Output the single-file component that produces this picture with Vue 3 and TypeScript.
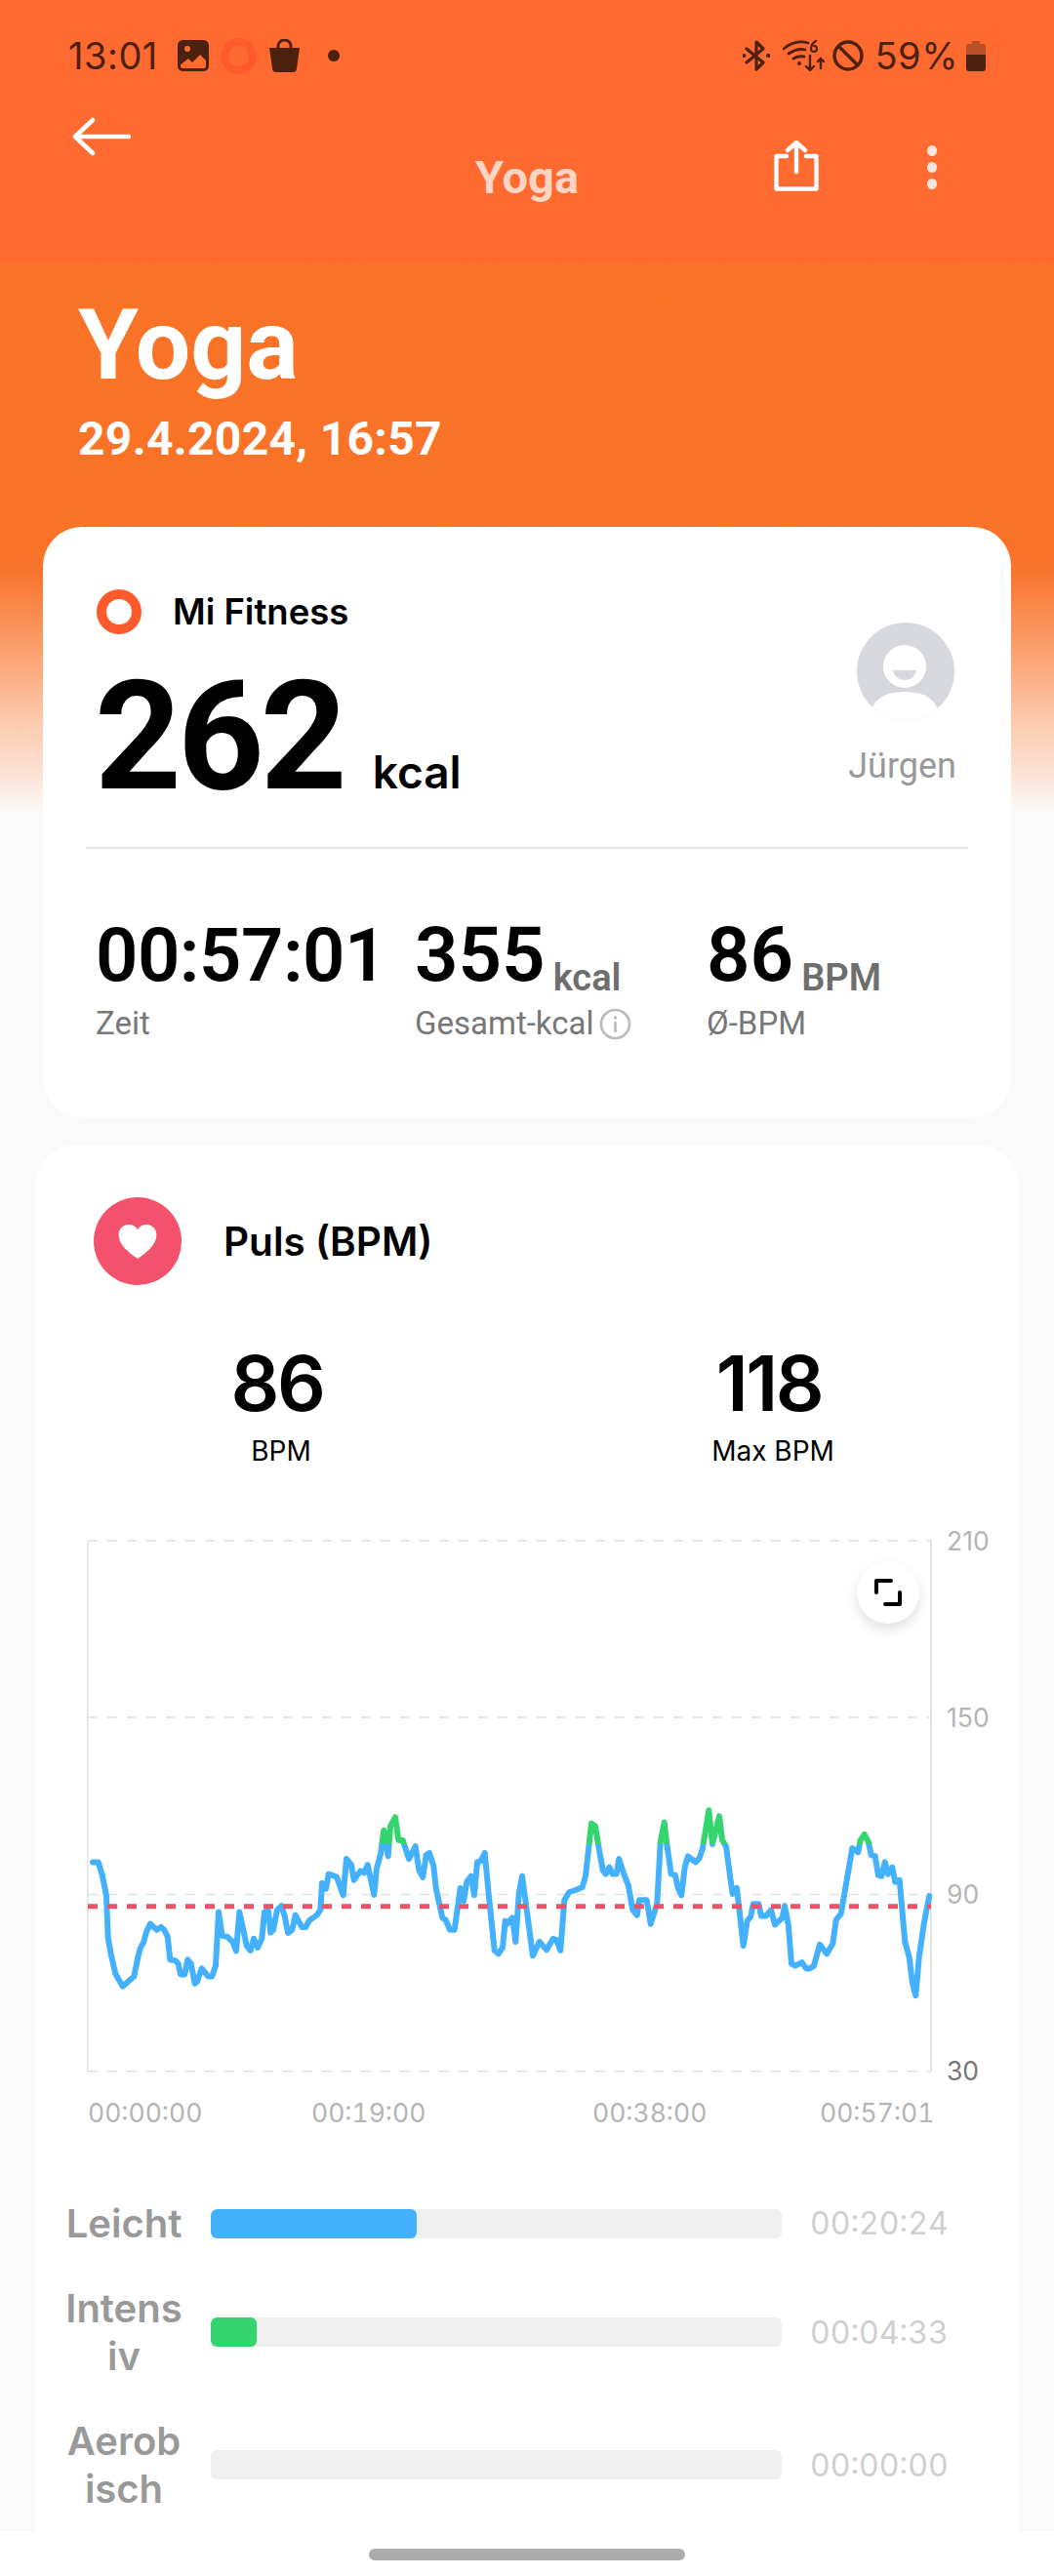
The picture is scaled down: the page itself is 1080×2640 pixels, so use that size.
<script setup lang="ts">
// heart rate trace, points read off the chart at (3x, 2.45y) scale
const raw: [number, number][] = [
  [105,905],[122,905],[135,940],[147,990],[152,1095],[162,1140],[175,1185],[197,1217],[232,1192],[245,1140],[252,1120],[262,1105],[270,1080],[282,1060],[302,1075],[315,1068],[325,1075],[335,1092],[343,1150],[358,1152],[368,1160],[375,1187],[388,1187],[397,1150],[407,1160],[419,1210],[426,1205],[440,1172],[460,1192],[472,1192],[483,1165],[492,1030],[503,1090],[518,1092],[535,1105],[546,1128],[556,1030],[568,1075],[578,1115],[590,1127],[600,1097],[612,1120],[625,1097],[633,1030],[645,1028],[652,1082],[660,1075],[672,1025],[685,1015],[695,1040],[705,1083],[718,1075],[728,1038],[748,1068],[760,1068],[770,1052],[795,1037],[805,1025],[810,958],[822,972],[830,935],[855,942],[875,988],[885,897],[900,912],[908,950],[928,927],[940,932],[950,912],[970,987],[978,920],[990,885],[1000,825],[1013,890],[1020,815],[1035,792],[1045,850],[1058,850],[1077,897],[1097,865],[1108,925],[1120,943],[1130,887],[1140,882],[1153,915],[1160,970],[1180,1045],[1190,1050],[1203,1075],[1217,1075],[1235,970],[1245,1003],[1255,955],[1268,940],[1278,988],[1287,905],[1298,902],[1310,882],[1322,985],[1340,1127],[1352,1135],[1365,1120],[1373,1052],[1380,1060],[1395,1045],[1405,1105],[1415,985],[1425,940],[1440,1030],[1458,1140],[1478,1105],[1500,1125],[1520,1097],[1530,1100],[1543,1127],[1555,1000],[1570,980],[1590,975],[1610,968],[1620,940],[1638,808],[1650,815],[1660,865],[1673,925],[1682,935],[1693,918],[1703,935],[1715,935],[1723,897],[1738,935],[1752,965],[1765,1025],[1778,1038],[1785,1000],[1808,1000],[1820,1060],[1840,1010],[1850,855],[1862,805],[1870,860],[1883,935],[1895,937],[1905,972],[1915,988],[1925,918],[1935,890],[1958,905],[1970,895],[1980,870],[1999,775],[2010,860],[2031,790],[2040,850],[2052,865],[2065,945],[2072,985],[2085,970],[2105,1115],[2117,1052],[2128,1042],[2135,1010],[2152,1010],[2160,1040],[2175,1040],[2190,1025],[2202,1062],[2225,1045],[2232,1015],[2243,1060],[2253,1160],[2265,1165],[2285,1157],[2298,1172],[2310,1172],[2322,1165],[2340,1112],[2362,1135],[2380,1110],[2390,1050],[2405,1035],[2440,870],[2458,880],[2465,850],[2477,835],[2490,855],[2498,888],[2510,890],[2520,938],[2530,940],[2540,905],[2550,935],[2563,918],[2572,955],[2585,950],[2602,1105],[2615,1145],[2625,1210],[2635,1240],[2645,1145],[2660,1060],[2667,1030],[2677,990],
]
const tracePoints = raw
  .map(([x, y]) => `${(x / 3 - 24).toFixed(1)},${(y / 2.45 - 34).toFixed(1)}`)
  .join(' ')

const gridLines = [
  { y: 6, label: '210' },
  { y: 187, label: '150' },
  { y: 368.4, label: '90' },
  { y: 549.7, label: '30' },
]
const timeLabels = [
  { x: 6, label: '00:00:00' },
  { x: 235, label: '00:19:00' },
  { x: 523, label: '00:38:00' },
  { x: 756, label: '00:57:01' },
]

const zones = [
  { name: 'Leicht', width: 36, color: '#44b1ff', time: '00:20:24' },
  { name: 'Intensiv', width: 8, color: '#34d46f', time: '00:04:33' },
  { name: 'Aerobisch', width: 0, color: '#44b1ff', time: '00:00:00' },
]
</script>

<template>
  <div class="screen">
    <header class="top">
      <div class="status">
        <div class="status-group">
          <span class="clock">13:01</span>
          <svg class="st-image" width="32" height="32" viewBox="0 0 32 32">
            <rect x="1.5" y="1.5" width="29" height="29" rx="4" fill="none" stroke="#4d2110" stroke-width="3" />
            <path d="M2 2h28v20l-7-7-8 8-4-4-9 7z" fill="#4d2110" />
            <circle cx="10" cy="9" r="3" fill="#ff6a30" />
          </svg>
          <span class="ring-small"></span>
          <svg width="33" height="34" viewBox="0 0 33 34">
            <path d="M10 10V7a6.5 6 0 0 1 13 0v3" fill="none" stroke="#4d2110" stroke-width="3" />
            <path d="M1 9h31l-3 21a4 4 0 0 1-4 4H8a4 4 0 0 1-4-4z" fill="#4d2110" />
          </svg>
          <span class="dot"></span>
        </div>
        <div class="status-group">
          <svg width="28" height="32" viewBox="0 0 28 32" fill="none" stroke="#4d2110" stroke-width="3.2" stroke-linejoin="round" stroke-linecap="round">
            <path d="M4 9l17 14-7 7V2l7 7L4 23" />
            <path d="M1 16h.5M26 16h.5" stroke-width="4" />
          </svg>
          <svg class="st-wifi" width="44" height="32" viewBox="0 0 44 32" fill="none" stroke="#4d2110" stroke-width="2.8" stroke-linecap="round">
            <path d="M1 9q12-10 25-6M6 14q9-6 17-4M11 19q5-3 11-2" />
            <circle cx="17" cy="24" r="2" fill="#4d2110" stroke="none" />
            <path d="M28 16v15m-4-4 4 4 4-4M39 29V19m-3 3 3-3 3 3" stroke-width="2.4" />
            <path d="M34 1q-5 3-5 8a3 3 0 1 0 3-3" stroke-width="2.2" />
          </svg>
          <svg class="st-block" width="32" height="32" viewBox="0 0 32 32" fill="none" stroke="#4d2110" stroke-width="3.4">
            <circle cx="16" cy="16" r="14" />
            <path d="M6 6l20 20" />
          </svg>
          <span class="clock">59%</span>
          <svg class="st-battery" width="22" height="32" viewBox="0 0 22 32">
            <path d="M7 1h8v3h3a3 3 0 0 1 3 3v8H1V7a3 3 0 0 1 3-3h3z" fill="#b9502a" />
            <path d="M1 15h20v14a3 3 0 0 1-3 3H4a3 3 0 0 1-3-3z" fill="#4d2110" />
          </svg>
        </div>
      </div>

      <div class="appbar">
        <svg class="back" width="60" height="40" viewBox="0 0 60 40" fill="none" stroke="#fff" stroke-width="4.6" stroke-linecap="round" stroke-linejoin="round">
          <path d="M21 3 3 20l18 17M3 20h55" />
        </svg>
        <span class="appbar-title">Yoga</span>
        <div class="actions">
          <svg class="share" width="46" height="53" viewBox="0 0 46 53" fill="none" stroke="#fff" stroke-width="4.4" stroke-linecap="round" stroke-linejoin="round">
            <path d="M13 17H2.500v33.500h41V17H33M23 33V3M14 11l9-8 9 8" />
          </svg>
          <div class="more">
            <span></span><span></span><span></span>
          </div>
        </div>
      </div>
    </header>

    <main class="content">
      <svg class="grain" width="1080" height="563">
        <filter id="grain-noise">
          <feTurbulence type="fractalNoise" baseFrequency="0.7" numOctaves="2" seed="3" />
          <feColorMatrix values="0 0 0 0 0.75  0 0 0 0 0.25  0 0 0 0 0  0 0 0 0.5 -0.1" />
        </filter>
        <rect width="1080" height="563" filter="url(#grain-noise)" />
      </svg>

      <div class="hero">
        <h1>Yoga</h1>
        <p>29.4.2024, 16:57</p>
      </div>

      <section class="card summary">
        <div class="summary-top">
          <div>
            <div class="source">
              <span class="ring"></span>
              <span>Mi Fitness</span>
            </div>
            <div class="calories">
              <span class="calories-value">262</span>
              <span class="calories-unit">kcal</span>
            </div>
          </div>
          <div class="user">
            <svg width="100" height="100" viewBox="0 0 100 100">
              <defs>
                <clipPath id="avatar-clip"><circle cx="50" cy="50" r="50" /></clipPath>
              </defs>
              <circle cx="50" cy="50" r="50" fill="#d6d8de" />
              <g clip-path="url(#avatar-clip)">
                <circle cx="49" cy="45" r="22" fill="#fff" />
                <path d="M37 49h24c-1 6-6 10-12 10s-11-4-12-10z" fill="#d6d8de" />
                <path d="M14 100V96q2-25 35-25t35 25v4z" fill="#fff" />
              </g>
            </svg>
            <span>Jürgen</span>
          </div>
        </div>
        <div class="divider"></div>
        <div class="stats">
          <div class="stat stat-time">
            <div class="stat-value time">00:57:01</div>
            <div class="stat-label">Zeit</div>
          </div>
          <div class="stat stat-total">
            <div class="stat-value">355<small>kcal</small></div>
            <div class="stat-label">
              Gesamt-kcal
              <svg width="33" height="33" viewBox="0 0 33 33" fill="none" stroke="#bbb" stroke-width="2.6">
                <circle cx="16.500" cy="16.500" r="14.500" />
                <path d="M16.500 15v9" stroke-linecap="round" />
                <circle cx="16.500" cy="10" r="1.700" fill="#bbb" stroke="none" />
              </svg>
            </div>
          </div>
          <div class="stat">
            <div class="stat-value">86<small>BPM</small></div>
            <div class="stat-label">Ø-BPM</div>
          </div>
        </div>
      </section>

      <section class="card pulse">
        <div class="pulse-head">
          <span class="heart">
            <svg width="42" height="37" viewBox="0 0 46 42">
              <path d="M23 41C9 31 1 23 1 13 1 6 6 1 13 1c4 0 8 2 10 6 2-4 6-6 10-6 7 0 12 5 12 12 0 10-8 18-22 28z" fill="#fff" />
            </svg>
          </span>
          <span>Puls (BPM)</span>
        </div>

        <div class="pulse-values">
          <div class="pulse-value">
            <strong>86</strong>
            <span>BPM</span>
          </div>
          <div class="pulse-value">
            <strong>118</strong>
            <span>Max BPM</span>
          </div>
        </div>

        <div class="chart">
          <svg width="980" height="610" viewBox="0 0 980 610">
            <defs>
              <clipPath id="zone-high"><rect x="0" y="0" width="980" height="317" /></clipPath>
              <clipPath id="zone-low"><rect x="0" y="317" width="980" height="293" /></clipPath>
            </defs>
            <line x1="6" y1="6" x2="6" y2="550" stroke="#e2e2e2" stroke-width="1.5" />
            <line x1="870" y1="6" x2="870" y2="550" stroke="#e2e2e2" stroke-width="2" />
            <line v-for="g in gridLines" :key="g.y" x1="6" :y1="g.y" x2="870" :y2="g.y" stroke="#e0e0e0" stroke-width="1.5" stroke-dasharray="10 10" />
            <polyline :points="tracePoints" fill="none" stroke="#44b1ff" stroke-width="6" stroke-linejoin="round" stroke-linecap="round" clip-path="url(#zone-low)" />
            <polyline :points="tracePoints" fill="none" stroke="#34d46f" stroke-width="6" stroke-linejoin="round" stroke-linecap="round" clip-path="url(#zone-high)" />
            <line x1="6" y1="380.700" x2="870" y2="380.700" stroke="#ea5267" stroke-width="5" stroke-dasharray="10 10" />
            <text v-for="g in gridLines" :key="g.label" x="886" :y="g.y + 9.500" class="axis" :class="{ dark: g.label === '30' }">{{ g.label }}</text>
            <text v-for="t in timeLabels" :key="t.label" :x="t.x" y="602" class="axis tabular">{{ t.label }}</text>
          </svg>
          <button class="expand" type="button">
            <svg width="28" height="28" viewBox="0 0 28 28" fill="none" stroke="#000" stroke-width="4" stroke-linecap="round" stroke-linejoin="round">
              <path d="M2 14V2h15M26 14v12H11" />
            </svg>
          </button>
        </div>

        <div class="zones">
          <div v-for="z in zones" :key="z.name" class="zone">
            <span class="zone-name">{{ z.name }}</span>
            <div class="zone-track">
              <div class="zone-fill" :style="{ width: z.width + '%', background: z.color }"></div>
            </div>
            <span class="zone-time">{{ z.time }}</span>
          </div>
        </div>
      </section>
    </main>

    <footer class="navbar"><span></span></footer>
  </div>
</template>

<style>
html, body { margin: 0; background: #fff; }
</style>

<style scoped>
.screen {
  width: 1080px;
  height: 2640px;
  display: flex;
  flex-direction: column;
  overflow: hidden;
  font-family: Inter, "Liberation Sans", sans-serif;
  color: #000;
}

.top {
  height: 270px;
  flex: none;
  background: #ff6a30;
}
.status {
  height: 114px;
  box-sizing: border-box;
  padding: 0 69px 0 70px;
  display: flex;
  align-items: center;
  justify-content: space-between;
}
.status-group { display: flex; align-items: center; gap: 12px; }
.clock { font-size: 38px; color: #4d2110; letter-spacing: 0.5px; }
.st-image { margin-left: 8px; }
.ring-small {
  width: 37px;
  height: 37px;
  box-sizing: border-box;
  border: 8px solid #ff5a2c;
  border-radius: 50%;
}
.dot {
  width: 12px;
  height: 12px;
  margin-left: 16px;
  border-radius: 50%;
  background: #4d2110;
}
.st-wifi { margin-left: 1px; }
.st-block { margin-left: -5px; }
.st-battery { margin-left: -5px; }

.appbar {
  height: 156px;
  display: grid;
  grid-template-columns: 1fr auto 1fr;
  align-items: start;
}
.back { margin: 6px 0 0 74px; }
.appbar-title {
  margin-top: 40px;
  font-family: Roboto, "Liberation Sans", sans-serif;
  font-size: 47px;
  line-height: 56px;
  font-weight: 700;
  color: #ffd4c3;
}
.actions {
  justify-self: end;
  display: flex;
  align-items: flex-start;
  gap: 111px;
  padding-right: 120px;
}
.share { margin-top: 29px; }
.more {
  margin-top: 35px;
  display: flex;
  flex-direction: column;
  gap: 6px;
}
.more span {
  width: 10px;
  height: 11px;
  border-radius: 50%;
  background: #ffe6dc;
}

.content {
  position: relative;
  flex: 1;
  min-height: 0;
  overflow: hidden;
  background: linear-gradient(#fb7229 0, #fb7229 50%, #fb7430 56%, #fb7a3a 58%, #fb9f6f 70%, #fcc6a8 82%, #fbe6da 94%, #fafafa 100%) top / 100% 563px no-repeat #fafafa;
}
.grain {
  position: absolute;
  left: 0;
  top: 0;
  opacity: 0.3;
  -webkit-mask-image: linear-gradient(#000 55%, transparent 88%);
  mask-image: linear-gradient(#000 55%, transparent 88%);
}
.hero {
  position: relative;
  padding: 29px 0 0 80px;
  height: 234px;
  box-sizing: border-box;
  color: #fff;
  font-family: Roboto, "Liberation Sans", sans-serif;
}
.hero h1 {
  margin: 0;
  font-size: 100px;
  line-height: 110px;
  font-weight: 700;
}
.hero p {
  margin: 13px 0 0;
  font-size: 48px;
  line-height: 56px;
  font-weight: 700;
  letter-spacing: 0.3px;
}

.card {
  position: relative;
  background: #fff;
  border-radius: 40px;
}
.summary {
  margin: 36px 44px 0;
  height: 605px;
  box-sizing: border-box;
  padding: 0 44px;
}
.summary-top {
  display: flex;
  justify-content: space-between;
  height: 328px;
}
.source {
  display: flex;
  align-items: center;
  gap: 32px;
  padding: 64px 0 0 11px;
  font-size: 36.5px;
  font-weight: 600;
}
.ring {
  width: 46px;
  height: 46px;
  box-sizing: border-box;
  border: 10px solid #ff5a2c;
  border-radius: 50%;
}
.calories {
  display: flex;
  align-items: baseline;
  gap: 30px;
  margin-top: 20px;
  padding-left: 9px;
}
.calories-value {
  font-family: Roboto, "Liberation Sans", sans-serif;
  font-size: 155px;
  line-height: 170px;
  font-weight: 700;
  letter-spacing: -4px;
}
.calories-unit { font-size: 46px; font-weight: 600; }
.user {
  display: flex;
  flex-direction: column;
  align-items: center;
  gap: 25px;
  padding: 98px 12px 0 0;
  font-family: Roboto, "Liberation Sans", sans-serif;
  font-size: 36px;
  line-height: 44px;
  color: #999;
}
.user svg { margin-left: 6px; }
.divider { height: 2px; background: #e4e4e4; }
.stats {
  display: flex;
  padding: 67px 0 0 10px;
  font-family: Roboto, "Liberation Sans", sans-serif;
}
.stat-time { width: 327px; }
.stat-total { width: 299px; }
.stat-value {
  font-size: 78px;
  line-height: 84px;
  font-weight: 600;
  white-space: nowrap;
}
.stat-value.time { font-size: 76px; letter-spacing: -0.5px; }
.stat-value small {
  margin-left: 8px;
  font-size: 38px;
  line-height: 0;
  font-weight: 600;
  color: #6e6e6e;
  vertical-align: -10px;
  letter-spacing: 0;
}
.stat-label {
  display: flex;
  align-items: center;
  gap: 6px;
  height: 40px;
  margin-top: 8px;
  font-size: 33px;
  line-height: 40px;
  color: #777;
  white-space: nowrap;
}

.pulse {
  margin: 29px 36px 0;
  padding-bottom: 60px;
}
.pulse-head {
  display: flex;
  align-items: center;
  gap: 43px;
  padding: 53px 0 0 60px;
  font-size: 40.5px;
  font-weight: 600;
}
.heart {
  width: 90px;
  height: 90px;
  border-radius: 50%;
  background: #f4516c;
  display: flex;
  align-items: center;
  justify-content: center;
}
.pulse-values {
  display: flex;
  margin-top: 57px;
}
.pulse-value {
  width: 504px;
  display: flex;
  flex-direction: column;
  align-items: center;
  font-size: 28px;
  line-height: 34px;
}
.pulse-value strong {
  font-size: 78px;
  line-height: 88px;
  font-weight: 600;
  letter-spacing: -2.5px;
  margin: 0 8px 8px 0;
}
.chart {
  position: relative;
  margin: 69px 0 0 48px;
  width: 980px;
}
.chart svg { display: block; overflow: visible; }
.axis { font-size: 26.5px; fill: #b5b5b5; font-family: Inter, "Liberation Sans", sans-serif; }
.axis.dark { fill: #777; }
.axis.tabular { font-variant-numeric: tabular-nums; }
.expand {
  position: absolute;
  left: 794px;
  top: 27px;
  width: 64px;
  height: 64px;
  padding: 0;
  border: none;
  border-radius: 50%;
  background: #fff;
  box-shadow: 0 6px 12px rgba(0, 0, 0, 0.12);
  display: flex;
  align-items: center;
  justify-content: center;
}
.zones {
  display: flex;
  flex-direction: column;
  gap: 38px;
  margin-top: 71px;
}
.zone {
  display: flex;
  align-items: center;
}
.zone-name {
  flex: none;
  width: 120px;
  margin-left: 31px;
  font-size: 40px;
  line-height: 49px;
  font-weight: 600;
  color: #999;
  text-align: center;
  word-break: break-all;
}
.zone-track {
  flex: none;
  width: 585px;
  height: 30px;
  margin-left: 29px;
  border-radius: 6px;
  background: #efefef;
  overflow: hidden;
}
.zone-fill { height: 100%; border-radius: 6px; }
.zone-time {
  margin-left: 29px;
  font-size: 32px;
  color: #cfcfcf;
  font-variant-numeric: tabular-nums;
}

.navbar {
  height: 45px;
  flex: none;
  background: #fff;
  display: flex;
  justify-content: center;
  padding-top: 17px;
  box-sizing: border-box;
}
.navbar span {
  width: 324px;
  height: 12px;
  border-radius: 6px;
  background: #acacac;
}
</style>
